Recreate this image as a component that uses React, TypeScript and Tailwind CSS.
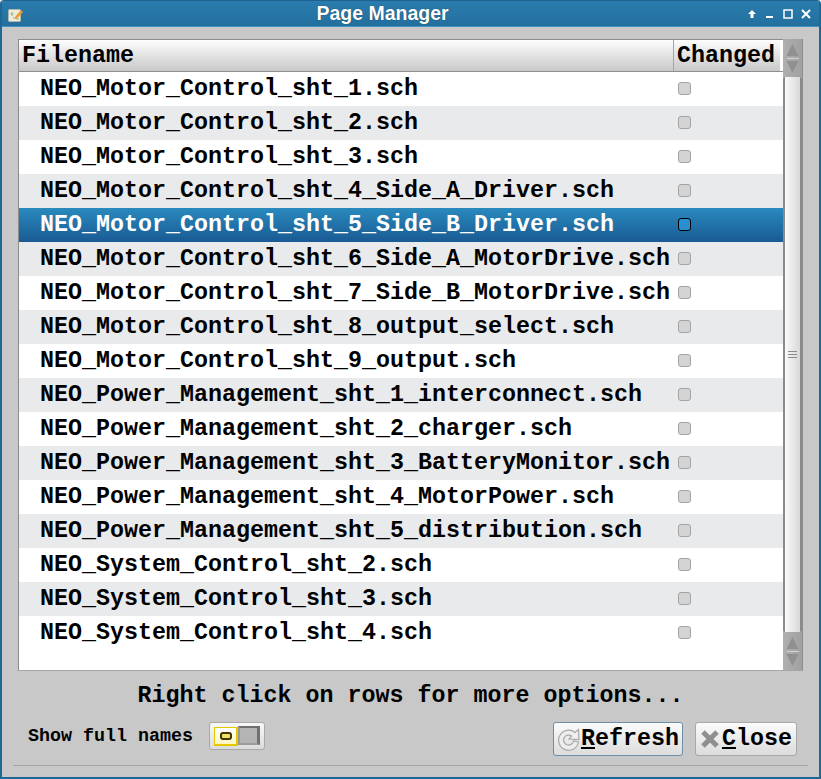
import { ReactNode } from 'react';

const files = [
  'NEO_Motor_Control_sht_1.sch',
  'NEO_Motor_Control_sht_2.sch',
  'NEO_Motor_Control_sht_3.sch',
  'NEO_Motor_Control_sht_4_Side_A_Driver.sch',
  'NEO_Motor_Control_sht_5_Side_B_Driver.sch',
  'NEO_Motor_Control_sht_6_Side_A_MotorDrive.sch',
  'NEO_Motor_Control_sht_7_Side_B_MotorDrive.sch',
  'NEO_Motor_Control_sht_8_output_select.sch',
  'NEO_Motor_Control_sht_9_output.sch',
  'NEO_Power_Management_sht_1_interconnect.sch',
  'NEO_Power_Management_sht_2_charger.sch',
  'NEO_Power_Management_sht_3_BatteryMonitor.sch',
  'NEO_Power_Management_sht_4_MotorPower.sch',
  'NEO_Power_Management_sht_5_distribution.sch',
  'NEO_System_Control_sht_2.sch',
  'NEO_System_Control_sht_3.sch',
  'NEO_System_Control_sht_4.sch',
];

function ScrollArrows() {
  return (
    <div className="flex h-[38px] shrink-0 flex-col items-center justify-center bg-gradient-to-r from-[#b0b0b0] to-[#a0a0a0]">
      <svg width="13" height="14" viewBox="0 0 13 14">
        <path d="M6.5 1 L12.5 13 L0.5 13 Z" fill="#909090" />
      </svg>
      <div className="my-[1px] h-px w-[12px] bg-[#d2d2d2]" />
      <svg width="13" height="14" viewBox="0 0 13 14">
        <path d="M0.5 1 L12.5 1 L6.5 13 Z" fill="#909090" />
      </svg>
    </div>
  );
}

function Row({ name, index }: { name: string; index: number }) {
  const selected = index === 4;
  const rowClass = selected
    ? 'bg-gradient-to-b from-[#2a8abd] to-[#1a5a94] text-white'
    : index % 2 === 1
      ? 'bg-[#e9eaec] text-black'
      : 'bg-white text-black';

  return (
    <div className={`flex h-[34px] items-center ${rowClass}`}>
      <div className="w-[659px] shrink-0 whitespace-nowrap pl-[21px] pt-[2px]">{name}</div>
      <div
        className={
          selected
            ? 'mb-[2px] h-[13px] w-[13px] rounded-[3px] border border-black bg-[#2a8fd0]'
            : 'mb-[2px] h-[13px] w-[13px] rounded-[3px] border border-[#a3a3a3] bg-[#d4d4d4]'
        }
      />
    </div>
  );
}

function DialogButton({
  icon,
  mnemonic,
  rest,
  className,
}: {
  icon: ReactNode;
  mnemonic: string;
  rest: string;
  className: string;
}) {
  return (
    <button
      type="button"
      className={`flex h-[34px] items-center justify-center rounded-[3px] border bg-gradient-to-b from-[#fbfbfb] to-[#dcdcdc] text-black ${className}`}
    >
      {icon}
      <span>
        <span className="underline decoration-2 underline-offset-2">{mnemonic}</span>
        {rest}
      </span>
    </button>
  );
}

export default function App() {
  return (
    <div className="flex h-[779px] w-[821px] flex-col overflow-hidden rounded-t-[4px] border-x-2 border-b-2 border-[#1f6795] bg-[#c8c8c8] font-['Liberation_Mono',monospace] text-[23.33px] font-bold leading-none">
      <header className="flex h-[27px] shrink-0 items-center border-b border-[#3f94c4] border-t border-t-[#1d628e] bg-gradient-to-b from-[#2a7cae] to-[#23709f] pl-[6px] pr-[8px]">
        <svg width="16" height="16" viewBox="0 0 16 16" className="mt-[5px] shrink-0">
          <rect x="0.5" y="1.5" width="12" height="12" rx="1" fill="#ececdc" stroke="#b5b5a5" />
          <path d="M4 4v4M2.5 6h3M5 9l2 2M8 11h3" stroke="#8fb98f" strokeWidth="1" />
          <path d="M7 9l6-7 2 2-6 6.5-2.5 .5z" fill="#ee9a2e" />
        </svg>
        <div className="mr-[6px] flex-1 text-center font-['Liberation_Sans',sans-serif] text-[19.5px] text-white [text-shadow:0_0_1px_#0a3550]">
          Page Manager
        </div>
        <div className="flex items-center gap-[8px]">
          <svg width="10" height="10" viewBox="0 0 10 10">
            <path d="M5 1 L9 5 L6.5 5 L6.5 9 L3.5 9 L3.5 5 L1 5 Z" fill="white" />
          </svg>
          <svg width="10" height="10" viewBox="0 0 10 10">
            <rect x="1" y="7" width="7" height="2" fill="white" />
          </svg>
          <svg width="10" height="10" viewBox="0 0 10 10">
            <rect x="1" y="1" width="8" height="8" fill="none" stroke="white" strokeWidth="1.5" />
          </svg>
          <svg width="10" height="10" viewBox="0 0 10 10">
            <path d="M1 1 L9 9 M9 1 L1 9" stroke="white" strokeWidth="2" />
          </svg>
        </div>
      </header>

      <main className="flex flex-1 flex-col px-[11px]">
        <div className="ml-[5px] mt-[12px] flex h-[632px] w-[785px] shrink-0 flex-col border border-[#8c8c8c] border-b-[#a8a8a8] bg-white">
          <div className="flex h-[32px] shrink-0 border-b border-[#8f8f8f]">
            <div className="flex w-[655px] shrink-0 items-center border-r border-[#a5a5a5] bg-gradient-to-b from-[#fdfdfd] to-[#c9c9c9] pl-[3px] pt-[2px]">
              Filename
            </div>
            <div className="flex w-[106px] shrink-0 items-center bg-gradient-to-b from-[#fdfdfd] to-[#c9c9c9] pl-[3px] pt-[2px]">
              Changed
            </div>
          </div>

          <div className="flex min-h-0 flex-1">
            <div className="w-[764px] shrink-0 overflow-hidden">
              {files.map((name, i) => (
                <Row key={name} name={name} index={i} />
              ))}
            </div>
            <div className="-mt-[33px] flex w-[19px] shrink-0 flex-col bg-[#c0c0c0]">
              <ScrollArrows />
              <div className="flex flex-1 items-center justify-center rounded-[2px] border-x-2 border-[#8a8a8a] bg-gradient-to-r from-[#fafafa] to-[#d8d8d8]">
                <div className="flex w-[9px] flex-col gap-[2px]">
                  <div className="h-px bg-[#8a8a8a]" />
                  <div className="h-px bg-[#8a8a8a]" />
                  <div className="h-px bg-[#8a8a8a]" />
                </div>
              </div>
              <ScrollArrows />
            </div>
          </div>
        </div>

        <div className="mt-[14px] text-center">Right click on rows for more options...</div>

        <div className="mt-[14px] flex h-[34px] items-start">
          <div className="ml-[15px] flex h-[28px] w-[165px] items-center whitespace-nowrap pt-[2px] text-[18.33px]">
            Show full names
          </div>
          <div className="ml-[16px] flex h-[28px] w-[56px] items-center rounded-[3px] border border-[#a8a8a8] bg-gradient-to-b from-[#f8f8f8] to-[#dcdcdc] pl-[4px]">
            <div className="flex h-[19px] w-[24px] items-center justify-center border border-b-2 border-r-2 border-[#e6c800] bg-gradient-to-b from-[#ffffff] to-[#fdf8c0]">
              <div className="h-[8px] w-[12px] rounded-[3px] border-2 border-[#3f3800] bg-[#f0e468]" />
            </div>
            <div className="mb-[1px] h-[19px] w-[22px] border-2 border-b-[#9a9a9a] border-l-[#9a9a9a] border-r-[3px] border-r-[#707070] border-t-[#707070] bg-[#b4b4b4]" />
          </div>
          <div className="ml-auto flex gap-[12px] pr-[11px]">
            <DialogButton
              className="w-[130px] border-[#6d8ea8]"
              mnemonic="R"
              rest="efresh"
              icon={
                <svg width="24" height="24" viewBox="0 0 24 24" className="shrink-0">
                  <path
                    d="M18 5.5 A10 10 0 1 0 21.5 15 L16.5 14 A5 5 0 1 1 14.5 9 L12 12 L22 12.5 L21.5 2.5 Z"
                    fill="#eeeeee"
                    stroke="#a8a8a8"
                    strokeWidth="1.2"
                  />
                </svg>
              }
            />
            <DialogButton
              className="w-[102px] border-[#a8a8a8]"
              mnemonic="C"
              rest="lose"
              icon={
                <svg width="22" height="20" viewBox="0 0 22 20" className="shrink-0">
                  <path d="M3 3 L17 17 M17 3 L3 17" stroke="#8f8f8f" strokeWidth="5" />
                </svg>
              }
            />
          </div>
        </div>

        <div className="mt-[9px] h-px bg-[#a5a5a5]" />
      </main>
    </div>
  );
}
